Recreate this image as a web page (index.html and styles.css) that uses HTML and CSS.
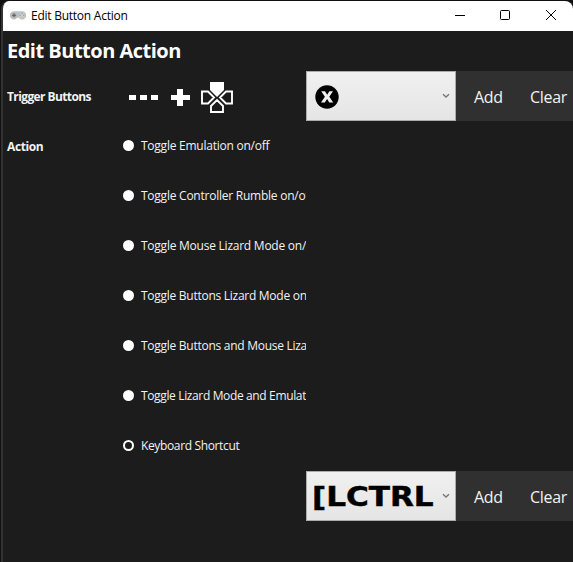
FILE: index.html
```html
<!DOCTYPE html>
<html lang="en">
<head>
<meta charset="utf-8">
<title>Edit Button Action</title>
<link rel="stylesheet" href="styles.css">
</head>
<body>
<div class="window">
  <header class="titlebar">
    <svg class="app-icon" width="16" height="12" viewBox="0 0 16 12">
      <path d="M4 1.200h8a3.800 3.800 0 0 1 0 8.400c-1.600 0-2.300-.9-3-1.800H7c-.7.9-1.400 1.800-3 1.800a3.800 3.800 0 0 1 0-8.400z" fill="#bcc1c4"/>
      <circle cx="4" cy="5.300" r="2.600" fill="#aab0b3"/><circle cx="12" cy="5.300" r="2.600" fill="#cbd0d2"/>
      <path d="M2.200 5.300h3.600M4 3.500v3.600" stroke="#5d6468" stroke-width="1.200"/>
      <circle cx="12" cy="3.500" r=".8" fill="#73bca0"/><circle cx="13.800" cy="5.300" r=".8" fill="#e08070"/>
      <circle cx="12" cy="7" r=".8" fill="#dfb774"/><circle cx="10.200" cy="5.300" r=".8" fill="#79a9c4"/>
    </svg>
    <span class="caption">Edit Button Action</span>
    <svg class="controls" width="102" height="12" viewBox="0 0 102 12" fill="none" stroke="#000">
      <path d="M0 5.500h10"/>
      <rect x="45.500" y="0.500" width="9" height="9" rx="1"/>
      <path d="M91 0l10 10M101 0l-10 10"/>
    </svg>
  </header>
  <main class="content">
    <h1>Edit Button Action</h1>
    <section class="row">
      <div class="label trigger">Trigger Buttons</div>
      <svg class="glyphs" width="183" height="50" viewBox="0 0 183 50">
        <g fill="#fff">
          <path d="M6 24h7v5H6zM17 24h7v5h-7zM28 24h7v5h-7z"/>
          <path d="M54 18h6v6h7v5h-7v6h-6v-6h-6v-5h6z"/>
          <path d="M87 11h14v8l-7 7-7-7z"/>
        </g>
        <g fill="none" stroke="#fff" stroke-width="1.900">
          <path d="M79 20.500h6l6 6-6 6h-6zM109 20.500h-6l-6 6 6 6h6zM88 41v-6l6-6 6 6v6z"/>
        </g>
      </svg>
      <div class="select">
        <svg class="x-button" width="24" height="24" viewBox="0 0 24 24"><circle cx="12" cy="12" r="11.700"/><path d="M6.200 6.200H10L12.200 9.700 14.400 6.200H18L14.300 11.800 18.200 17.400H14.300L12.100 14 9.800 17.400H6L9.900 11.800z" fill="#f0f0f0"/></svg>
        <svg class="chevron" width="8" height="6" viewBox="0 0 8 6"><path d="M1 1.200l3 2.800 3-2.800" fill="none" stroke="#777" stroke-width="1.400"/></svg>
      </div>
      <div class="button add">Add</div><div class="button clear">Clear</div>
    </section>
    <section class="actions">
      <div class="label">Action</div>
      <div class="options">
        <div class="option"><i class="radio"></i><span>Toggle Emulation on/off</span></div>
        <div class="option"><i class="radio"></i><span>Toggle Controller Rumble on/off</span></div>
        <div class="option"><i class="radio"></i><span>Toggle Mouse Lizard Mode on/off</span></div>
        <div class="option snug"><i class="radio"></i><span>Toggle Buttons Lizard Mode on/off</span></div>
        <div class="option snug"><i class="radio"></i><span>Toggle Buttons and Mouse Lizard Mode</span></div>
        <div class="option tight"><i class="radio"></i><span>Toggle Lizard Mode and Emulation</span></div>
        <div class="option tight"><i class="radio checked"></i><span>Keyboard Shortcut</span></div>
      </div>
    </section>
    <section class="row shortcut">
      <div class="select">
        <span class="key">[LCTRL</span>
        <svg class="chevron" width="8" height="6" viewBox="0 0 8 6"><path d="M1 1.200l3 2.800 3-2.800" fill="none" stroke="#777" stroke-width="1.400"/></svg>
      </div>
      <div class="button add">Add</div><div class="button clear">Clear</div>
    </section>
  </main>
</div>
</body>
</html>
```
FILE: styles.css
```css
* { box-sizing: border-box; }
body {
  margin: 0;
  height: 562px;
  padding: 1px 0 0 1px;
  overflow: hidden;
  background: #111;
  font-family: "Open Sans", "Noto Sans", sans-serif;
  color: #f2f2f2;
}
.window {
  width: 572px;
  height: 561px;
  overflow: hidden;
  border-left: 2px solid #333;
  border-radius: 8px 8px 0 0;
  background: #1c1c1c;
}
.titlebar {
  display: flex;
  align-items: center;
  height: 30px;
  margin-left: -1px;
  padding: 0 16px 0 8px;
  background: #fff;
  color: #000;
}
.app-icon { flex: none; }
.caption { margin-left: 5px; font-size: 12px; line-height: 30px; letter-spacing: -0.25px; white-space: nowrap; }
.controls { flex: none; margin-left: auto; }
.content { height: 531px; }
h1 {
  height: 40px;
  margin: 0;
  padding-left: 4px;
  font-size: 20px;
  line-height: 39px;
  font-weight: 700;
  letter-spacing: -0.5px;
  color: #fff;
}
.row { display: flex; height: 50px; }
.label {
  flex: none;
  width: 120px;
  padding-left: 4px;
  font-size: 12px;
  line-height: 52px;
  font-weight: 700;
  letter-spacing: -0.4px;
}
.trigger { letter-spacing: -0.6px; }
.glyphs { flex: none; }
.select {
  display: flex;
  flex: none;
  align-items: center;
  width: 150px;
  height: 50px;
  padding: 0 4px 0 7px;
  border: 1px solid #acacac;
  background: linear-gradient(#f0f0f0, #e5e5e5);
  color: #000;
}
.x-button { margin: 2px 0 0 1px; }
.chevron { flex: none; margin: 0 1px 1px auto; }
.key {
  width: 105px;
  margin: 2px 0 0 -2px;
  font: 700 27px/48px "DejaVu Sans", sans-serif;
  -webkit-text-stroke: 0.5px #000;
  transform: scaleX(1.15);
  transform-origin: left;
}
.button {
  flex: none;
  background: #303030;
  height: 50px;
  font-size: 16px;
  line-height: 52px;
  letter-spacing: -0.3px;
}
.add { width: 65px; padding-left: 18px; }
.clear { width: 52px; padding-left: 9px; }
.actions { display: flex; height: 350px; }
.options { width: 183px; overflow: hidden; }
.option {
  display: flex;
  align-items: center;
  height: 50px;
  font-size: 12px;
  line-height: 50px;
  letter-spacing: -0.24px;
  white-space: nowrap;
}
.option.snug { letter-spacing: -0.27px; }
.option.tight { letter-spacing: -0.36px; }
.radio {
  flex: none;
  width: 11px;
  height: 11px;
  margin: 0 7px 1px 0;
  border-radius: 50%;
  background: #fff;
}
.radio.checked { border: 2.5px solid #fff; background: #1c1c1c; }
.shortcut { padding-left: 303px; }
```
